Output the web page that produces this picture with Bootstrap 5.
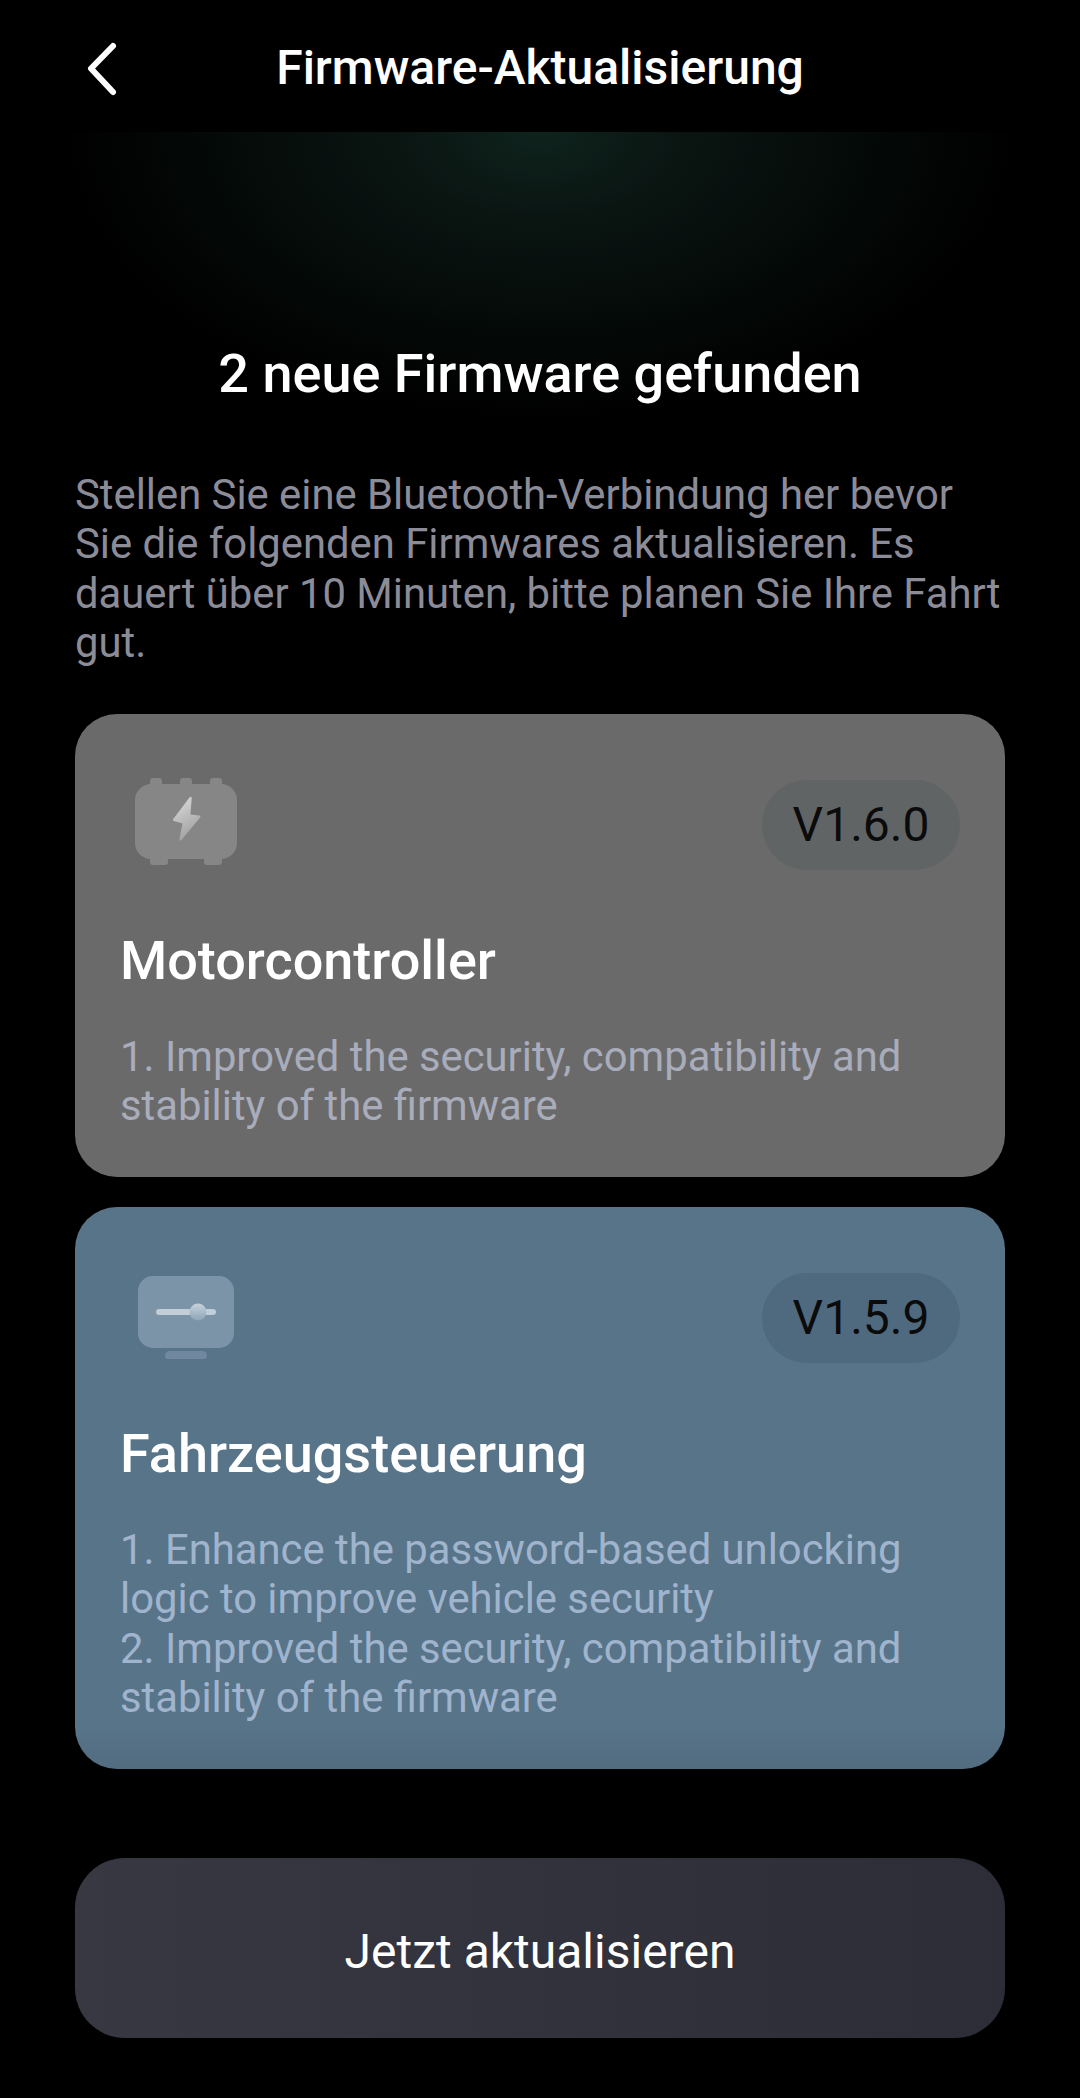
<!DOCTYPE html>
<html lang="de">
<head>
<meta charset="utf-8">
<title>Firmware-Aktualisierung</title>
<link rel="stylesheet" href="https://cdn.jsdelivr.net/npm/bootstrap@5.3.0/dist/css/bootstrap.min.css">
<style>
html,body{background:#000;margin:0}
body{width:1080px;height:2098px;overflow:hidden;font-family:Roboto,"Liberation Sans",sans-serif;color:#fff}
.top-bar{height:132px;padding:41px 75px 0}
.top-title{font-size:48px;font-weight:500;line-height:56px;margin:0;left:0;right:0;top:40px;text-align:center;color:#fff}
.back-link{margin-left:9px;display:block;width:34px;height:56px}
.glow-zone{height:312px;background:radial-gradient(ellipse 480px 290px at 50% 0,#0f231d 0,#0a1512 30%,#050c0a 60%,#020403 85%,#000 100%)}
.found-title{font-size:54px;font-weight:500;line-height:64px;text-align:center;margin:0;padding-top:210px}
.lead-text{font-size:41.8px;line-height:49.3px;color:#8c8c98;margin:0;padding:26px 75px 0}
.fw-list{padding:47px 75px 0;gap:30px}
.fw-card{border:0;border-radius:42px;padding:64px 45px 0;color:#fff}
.fw-motor{height:463px;background:#6a6a6a}
.fw-ctrl{height:562px;background:linear-gradient(180deg,#587489 0,#587489 92%,#526c80 100%);padding-top:62px}
.fw-icon{display:block;width:110px;height:90px;margin-left:15px}
.fw-badge{width:198px;height:90px;border-radius:45px;font-size:48px;line-height:90px;text-align:center;color:#0b0b0b;margin-top:2px}
.fw-ctrl .fw-badge{margin-top:4px}
.fw-motor .fw-badge{background:#606465}
.fw-ctrl .fw-badge{background:#4f6a7e}
.fw-name{font-size:54px;font-weight:500;line-height:64px;margin:59px 0 0}
.fw-notes{font-size:41.8px;line-height:49.3px;margin:39px 0 0}
.fw-motor .fw-notes{color:#a9acbb}
.fw-ctrl .fw-notes{color:#a0b4cd}
.update-wrap{padding:89px 75px 0}
.update-btn{display:block;width:100%;height:180px;border:0;border-radius:50px;background:linear-gradient(90deg,#383842,#2d2d37);color:#fff;font-size:48px;font-weight:400;line-height:1;padding-top:14px}
.update-btn:hover,.update-btn:active{background:linear-gradient(90deg,#383842,#2d2d37);color:#fff}
</style>
</head>
<body>
<header class="top-bar position-relative">
  <h1 class="top-title position-absolute">Firmware-Aktualisierung</h1>
  <a class="back-link" href="#" aria-label="Zurück">
    <svg width="34" height="56" viewBox="0 0 34 56"><path d="M29 5 7 27.500 29 51" fill="none" stroke="#fff" stroke-width="6" stroke-linecap="round" stroke-linejoin="round"/></svg>
  </a>
</header>
<section class="glow-zone"><h2 class="found-title">2 neue Firmware gefunden</h2></section>
<p class="lead-text">Stellen Sie eine Bluetooth-Verbindung her bevor Sie die folgenden Firmwares aktualisieren. Es dauert über 10 Minuten, bitte planen Sie Ihre Fahrt gut.</p>
<main class="fw-list d-flex flex-column">
  <article class="card fw-card fw-motor">
    <div class="d-flex justify-content-between align-items-start">
      <svg class="fw-icon" viewBox="0 0 110 90">
        <defs><linearGradient id="boltA" x1="0" y1="0" x2="0.4" y2="1"><stop offset="0" stop-color="#dedede"/><stop offset="1" stop-color="#a2a2a2"/></linearGradient></defs>
        <g fill="#868686">
          <rect x="15" y="0" width="12" height="10" rx="3"/><rect x="45" y="0" width="12" height="10" rx="3"/><rect x="75" y="0" width="12" height="10" rx="3"/>
          <rect x="15" y="78" width="18" height="9" rx="3"/><rect x="69" y="78" width="18" height="9" rx="3"/>
          <rect x="0" y="6" width="102" height="75" rx="16"/>
        </g>
        <path d="M54.500 19.500c1-1.300 2.300-.8 2.200.8L55.500 36.500l8.800 1c1.100.2 1.500 1 .8 2L46.500 62c-1 1.200-2.200.7-2-.8L47.500 45.500 39 43c-1.100-.3-1.400-1.200-.7-2z" fill="url(#boltA)"/>
      </svg>
      <span class="fw-badge">V1.6.0</span>
    </div>
    <h3 class="fw-name">Motorcontroller</h3>
    <p class="fw-notes">1. Improved the security, compatibility and stability of the firmware</p>
  </article>
  <article class="card fw-card fw-ctrl">
    <div class="d-flex justify-content-between align-items-start">
      <svg class="fw-icon" viewBox="0 0 110 90">
        <defs><linearGradient id="knobA" x1="0" y1="0" x2="0" y2="1"><stop offset="0" stop-color="#c6d2dc"/><stop offset="1" stop-color="#8fa5b6"/></linearGradient></defs>
        <rect x="3" y="7" width="96" height="72" rx="15" fill="#7b94a8"/>
        <rect x="30" y="82" width="42" height="9" rx="4.500" fill="#7089a0"/>
        <rect x="21" y="40" width="60" height="6" rx="3" fill="#c2ced8"/>
        <circle cx="63" cy="43" r="8.500" fill="url(#knobA)"/>
      </svg>
      <span class="fw-badge">V1.5.9</span>
    </div>
    <h3 class="fw-name">Fahrzeugsteuerung</h3>
    <p class="fw-notes">1. Enhance the password-based unlocking logic to improve vehicle security<br>2. Improved the security, compatibility and stability of the firmware</p>
  </article>
</main>
<div class="update-wrap"><button type="button" class="btn update-btn">Jetzt aktualisieren</button></div>
<script src="https://cdn.jsdelivr.net/npm/bootstrap@5.3.0/dist/js/bootstrap.bundle.min.js"></script>
</body>
</html>
